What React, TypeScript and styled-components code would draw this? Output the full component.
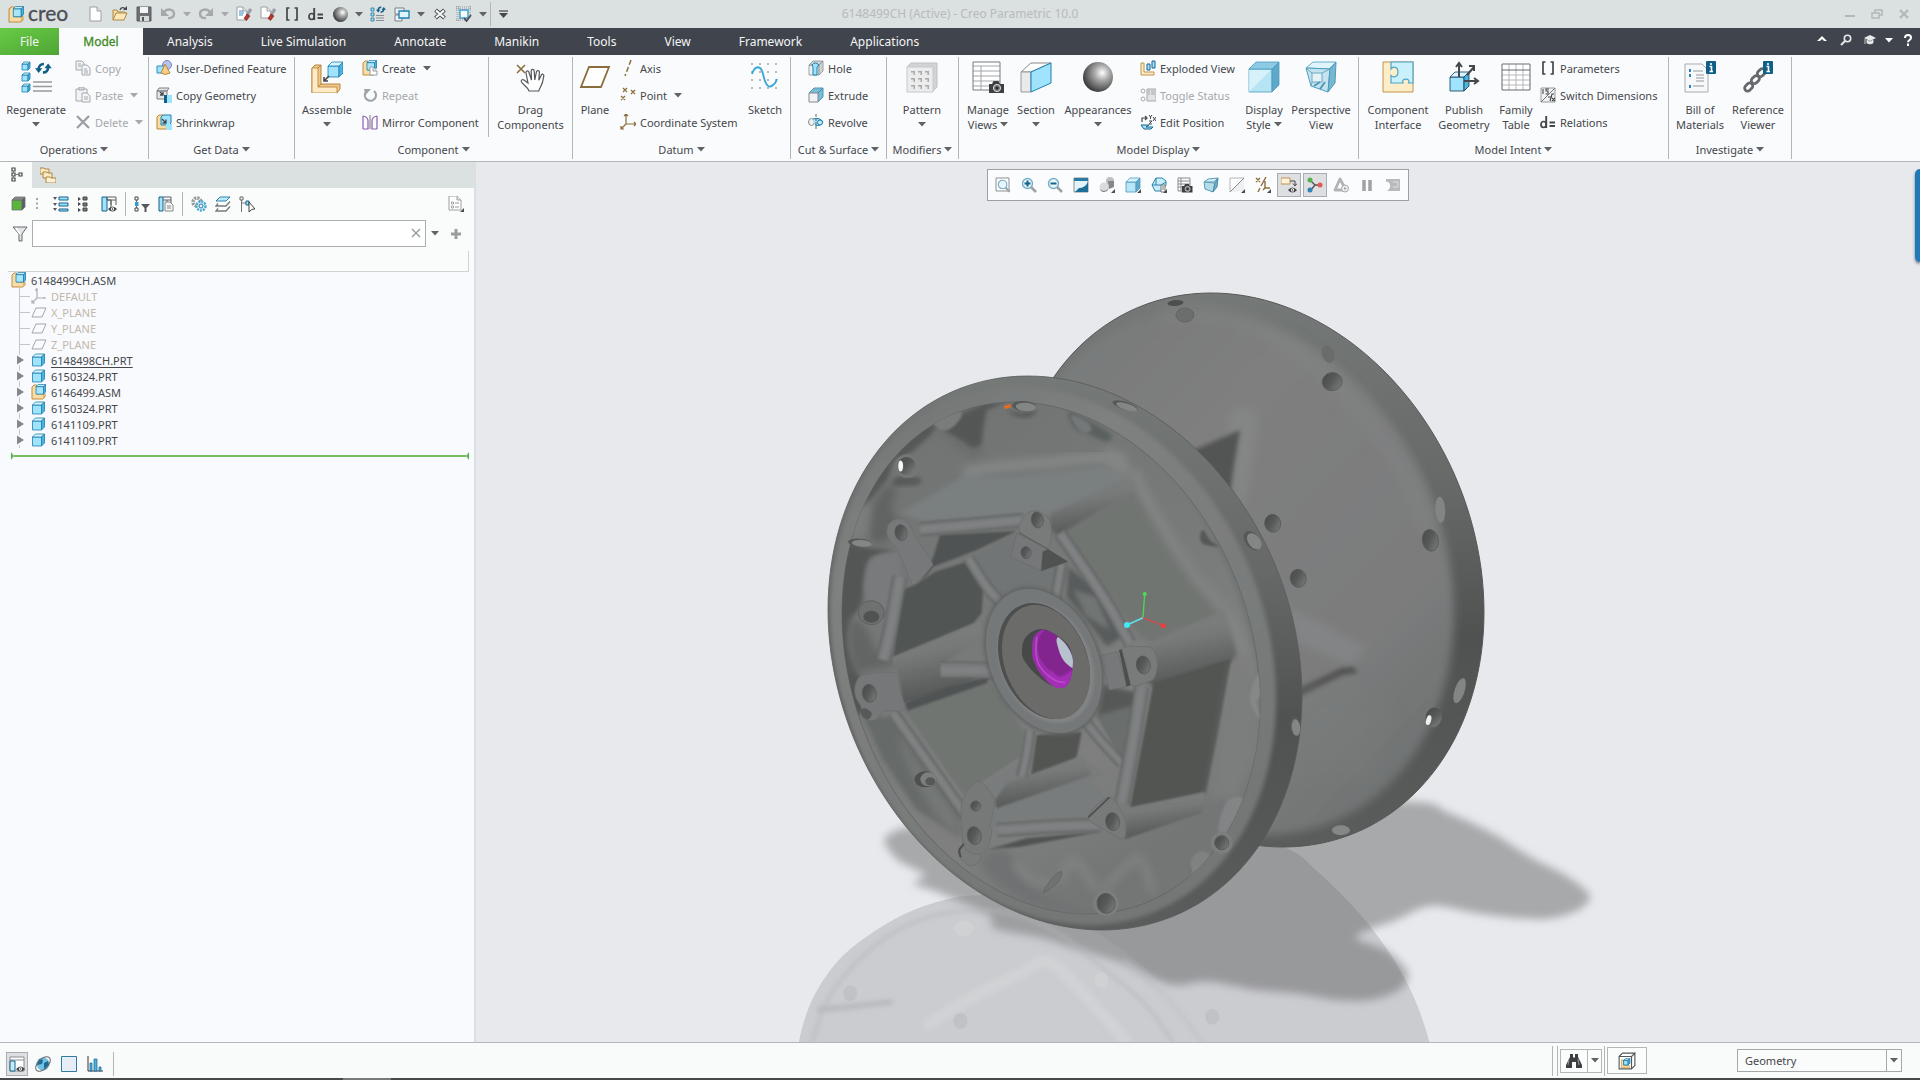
import React from "react";
import styled, { createGlobalStyle, css } from "styled-components";

const GlobalStyle = createGlobalStyle`
  * { box-sizing: border-box; }
  body { margin: 0; background: #fafbfd; }
  button, input, select { font: inherit; color: inherit; }
`;

const INK = "#45474b";
const MUTED = "#a6a8ab";
const BLUE = "#9fe3fc";
const DEEP = "#15638c";
const GOLD = "#8a6d3b";

const buttonReset = css`
  appearance: none;
  border: 0;
  background: none;
  padding: 0;
  margin: 0;
  cursor: default;
`;

/* ---------- frame ---------- */

const Frame = styled.div`
  min-height: 100vh;
  display: flex;
  flex-direction: column;
  font-family: "Noto Sans", "Open Sans", sans-serif;
  font-size: 11px;
  line-height: 15px;
  color: ${INK};
`;

const TitleBar = styled.header`
  display: grid;
  grid-template-columns: 1fr auto 1fr;
  align-items: center;
  height: 28px;
  background: #dbe0e0;
`;

const QuickBar = styled.div`
  display: flex;
  align-items: center;
  padding-left: 8px;
`;

const Brand = styled.div`
  display: flex;
  align-items: center;
  gap: 3px;
  width: 76px;
  padding-bottom: 2px;
  font-family: Lato, sans-serif;
  font-size: 21px;
  line-height: 24px;
  color: #4b4f55;
  -webkit-text-stroke: 0.3px #4b4f55;
  & > svg { margin-top: 2px; }
`;

const Title = styled.h1`
  margin: 0;
  font-size: 12px;
  line-height: 16px;
  font-weight: 400;
  color: #b7bbbc;
`;

const WindowButtons = styled.div`
  display: flex;
  justify-content: flex-end;
  padding-right: 3px;
`;

const IconButton = styled.button<{ $w?: number; $h?: number; $on?: boolean }>`
  ${buttonReset}
  display: flex;
  flex: none;
  align-items: center;
  justify-content: center;
  width: ${(p) => p.$w ?? 24}px;
  height: ${(p) => p.$h ?? 24}px;
  ${(p) => p.$on && css`background: #dddfe2; border: 1px solid #a9acb0;`}
`;

const Rule = styled.span<{ $h: number; $m?: number }>`
  flex: none;
  width: 1px;
  height: ${(p) => p.$h}px;
  margin: 0 ${(p) => p.$m ?? 0}px;
  background: #b3b6b9;
`;

/* ---------- tabs ---------- */

const TabBar = styled.nav`
  display: flex;
  height: 27px;
  background: #40444c;
  font-size: 12px;
  line-height: 16px;
`;

const Tab = styled.button<{ $kind?: "file" | "active" }>`
  ${buttonReset}
  padding: 0 24px;
  color: #f4f5f6;
  ${(p) => p.$kind === "file" && css`
    width: 59px; padding: 0; background: linear-gradient(160deg, #67cb45, #4fa535);
  `}
  ${(p) => p.$kind === "active" && css`
    width: 84px; padding: 0; background: #fafbfd; color: #3f8a24; -webkit-text-stroke: 0.3px #3f8a24;
  `}
`;

const TabTools = styled.div`
  display: flex;
  align-items: center;
  margin-left: auto;
  padding-bottom: 3px;
`;

/* ---------- ribbon ---------- */

const Ribbon = styled.section`
  display: flex;
  height: 107px;
  padding-top: 2px;
  background: #fafbfd;
  border-bottom: 1px solid #b4b8bc;
`;

const GroupBox = styled.div<{ $w: number }>`
  display: flex;
  flex-direction: column;
  flex: none;
  width: ${(p) => p.$w}px;
  height: 102px;
  border-right: 1px solid #b3b6b9;
`;

const GroupBody = styled.div<{ $pad?: number }>`
  display: flex;
  flex: none;
  height: 80px;
  padding-left: ${(p) => p.$pad ?? 0}px;
`;

const GroupLabel = styled.button`
  ${buttonReset}
  display: flex;
  flex: none;
  align-items: center;
  justify-content: center;
  gap: 3px;
  height: 24px;
`;

const BigButton = styled.button<{ $w: number }>`
  ${buttonReset}
  display: flex;
  flex-direction: column;
  flex: none;
  align-items: center;
  justify-content: flex-start;
  width: ${(p) => p.$w}px;
  padding-top: 4px;
  white-space: nowrap;
  & > svg { flex: none; margin-bottom: 9px; }
`;

const BigLine = styled.span`
  display: flex;
  align-items: center;
  justify-content: center;
  gap: 3px;
  height: 15px;
`;

const SmallColumn = styled.div<{ $w: number; $ruled?: boolean }>`
  display: grid;
  grid-template-rows: repeat(3, 22px);
  gap: 5px;
  flex: none;
  width: ${(p) => p.$w}px;
  padding-left: 3px;
  ${(p) => p.$ruled && css`border-right: 1px solid #b3b6b9;`}
`;

const SmallButton = styled.button`
  ${buttonReset}
  display: flex;
  align-items: center;
  gap: 4px;
  white-space: nowrap;
  &:disabled { color: ${MUTED}; }
  & > span { margin-right: 3px; }
`;

/* ---------- body ---------- */

const Body = styled.main`
  flex: 1;
  display: flex;
  min-height: 0;
`;

const Side = styled.aside`
  display: flex;
  flex-direction: column;
  flex: none;
  width: 476px;
  background: #fafcfb;
  border-right: 2px solid #dadfe3;
`;

const SideTabs = styled.div`
  display: flex;
  height: 26px;
  background: #dbe0e0;
`;

const SideTab = styled.button<{ $on?: boolean }>`
  ${buttonReset}
  display: flex;
  align-items: center;
  justify-content: center;
  width: 32px;
  ${(p) => p.$on && css`background: #fafcfb;`}
`;

const SideTools = styled.div`
  display: flex;
  align-items: center;
  height: 32px;
  padding: 0 6px;
`;

const Spacer = styled.span<{ $w?: number }>`
  ${(p) => (p.$w ? css`flex: none; width: ${p.$w}px;` : css`flex: 1;`)}
`;

const FilterRow = styled.div`
  display: flex;
  align-items: center;
  height: 27px;
  padding: 0 6px 0 8px;
`;

const FilterField = styled.div`
  display: flex;
  flex: 1;
  height: 27px;
  background: #fff;
  border: 1px solid #acafb2;
`;

const FilterInput = styled.input`
  flex: 1;
  min-width: 0;
  padding: 0 6px;
  border: 0;
  outline: 0;
  background: transparent;
`;

const ColumnHead = styled.div`
  height: 21px;
  margin: 4px 5px 0 8px;
  border-right: 1px solid #cfd3d6;
  border-bottom: 1px solid #cfd3d6;
`;

const Tree = styled.ul`
  flex: 1;
  margin: 0;
  padding: 0 5px 0 11px;
  list-style: none;
  background: #f9fafd;
`;

const TreeRow = styled.li<{ $dim?: boolean; $current?: boolean }>`
  display: flex;
  align-items: center;
  height: 16px;
  color: ${(p) => (p.$dim ? "#c0b8a8" : INK)};
  & > svg:last-of-type { margin-right: 4px; }
  & > span { text-decoration: ${(p) => (p.$current ? "underline" : "none")}; text-underline-offset: 2px; }
`;

const InsertLine = styled.li`
  display: flex;
  align-items: center;
  height: 16px;
`;

const InsertBar = styled.span`
  flex: 1;
  height: 2px;
  background: #76bd5f;
`;

const View = styled.section`
  position: relative;
  flex: 1;
  display: flex;
  flex-direction: column;
  align-items: center;
  min-width: 0;
  padding-top: 7px;
  overflow: hidden;
  background: #e8e9ed;
`;

const Scene = styled.svg`
  position: absolute;
  inset: 0;
  width: 100%;
  height: 100%;
`;

const ViewTools = styled.div`
  position: relative;
  display: flex;
  align-items: center;
  height: 32px;
  padding: 0 2px;
  background: #fbfcfd;
  border: 1px solid #9da1a6;
`;

const ViewSlot = styled.div`
  display: flex;
  justify-content: center;
  width: 26px;
`;

const Drawer = styled.button`
  ${buttonReset}
  position: absolute;
  top: 7px;
  right: 0;
  width: 5px;
  height: 93px;
  border-radius: 5px 0 0 5px;
  background: #2079b9;
  box-shadow: 0 2px 3px #6c7780;
`;

const StatusBar = styled.footer`
  display: flex;
  align-items: center;
  height: 36px;
  padding: 0 18px 0 4px;
  background: #f9fbfa;
  border-top: 1px solid #b4b6b9;
`;

const StatusTools = styled.div`
  display: flex;
  align-items: center;
  padding-top: 6px;
`;

const StatusBox = styled.div<{ $w: number; $h: number }>`
  display: flex;
  align-items: center;
  width: ${(p) => p.$w}px;
  height: ${(p) => p.$h}px;
  border: 1px solid #b4b6b8;
  background: #fbfcfc;
`;

const Picker = styled.label`
  position: relative;
  display: block;
  width: 165px;
  height: 23px;
  margin-left: 90px;
  & > svg { position: absolute; right: 4px; top: 9px; pointer-events: none; }
  &::after { content: ""; position: absolute; right: 15px; top: 0; width: 1px; height: 23px; background: #a5a8ab; }
`;

const PickerSelect = styled.select`
  appearance: none;
  width: 100%;
  height: 100%;
  padding: 0 7px;
  border: 1px solid #a5a8ab;
  border-radius: 0;
  background: #fafbfb;
`;

const BottomEdge = styled.div`
  display: flex;
  height: 2px;
  padding-left: 343px;
  background: #48494a;
  &::before { content: ""; width: 48px; background: #77797a; }
`;

/* ---------- icon building blocks ---------- */

type Draw = React.ReactNode;

const Ico = ({ s = 16, b = s, children }: { s?: number; b?: number; children?: Draw }) => (
  <svg width={s} height={s} viewBox={`0 0 ${b} ${b}`} fill="none" aria-hidden="true">{children}</svg>
);

const Caret = ({ c = "#606266" }: { c?: string }) => (
  <svg width="8" height="5" viewBox="0 0 8 5" aria-hidden="true"><path d="M0 0h8L4 4.6z" fill={c} /></svg>
);

type CubeProps = { x?: number; y?: number; s?: number; d?: number; f?: string; t?: string; r?: string; k?: string };
const Cube = ({ x = 0, y = 0, s = 10, d = 3, f = BLUE, t = "#d8f5ff", r = "#4fb3df", k = "#1c7fae" }: CubeProps) => (
  <g stroke={k} strokeWidth=".8" strokeLinejoin="round">
    <path d={`M${x} ${y + d}h${s}v${s}h${-s}z`} fill={f} />
    <path d={`M${x} ${y + d}l${d} ${-d}h${s}l${-d} ${d}z`} fill={t} />
    <path d={`M${x + s} ${y + d}l${d} ${-d}v${s}l${-d} ${d}z`} fill={r} />
  </g>
);

const AsmGlyph = () => (
  <g>
    <path d="M1 3l2-2h3v9h8v3l-2 2H1z" fill="#f9dda6" stroke="#c08d40" strokeLinejoin="round" />
    <path d="M12 15l2-2v-3h-2z" fill="#e3b566" />
    <Cube x={5} y={.6} s={7.500} d={2} f="#a9e6fb" />
  </g>
);

const Page = ({ x = 2, y = 1, w = 11, h = 14 }: { x?: number; y?: number; w?: number; h?: number }) => (
  <g>
    <path d={`M${x} ${y}h${w - 4}l4 4v${h - 4}h${-w}z`} fill="#fff" stroke="#9b9ea2" />
    <path d={`M${x + w - 4} ${y}v4h4`} fill="#e6e8ea" stroke="#9b9ea2" />
  </g>
);

const Eraser = () => <g><path d="M15 3l-4 6" stroke="#9da1a5" strokeWidth="3.400" /><path d="M11 8l-3 4.500 2.500 2L14 10z" fill="#b5362b" stroke="#7d241b" strokeWidth=".6" /></g>;
const Swap = ({ x = 0, y = 0, k = 1 }: { x?: number; y?: number; k?: number }) => (
  <g transform={`translate(${x} ${y}) scale(${k})`}>
    <path d="M3.500 7c0-3 1.500-5 5-5" stroke="#0f5f86" strokeWidth="2.400" />
    <path d="M12.500 5c0 3-1.500 5-5 5" stroke="#0f5f86" strokeWidth="2.400" />
    <path d="M0 6h7L3.500 10.500zM16 6H9l3.500-4.500z" fill="#0f5f86" />
  </g>
);
const Arrows = ({ c }: { c: string }) => <g><path d="M4 6c3-4 10-3 10 2 0 3-3 4.500-6 4" stroke={c} strokeWidth="2.400" /><path d="M1 2v8h8z" fill={c} /></g>;
const Ball = ({ s }: { s: number }) => (
  <Ico s={s} b={30}>
    <defs><radialGradient id={`ball${s}`} cx=".64" cy=".36" r=".66"><stop offset="0" stopColor="#fff" /><stop offset=".4" stopColor="#a6a6a6" /><stop offset="1" stopColor="#3e3e3e" /></radialGradient></defs>
    <circle cx="15" cy="15" r="15" fill={`url(#ball${s})`} />
  </Ico>
);
const Brackets = () => <Ico><path d="M5.500 2H3v12h2.500M10.500 2H13v12h-2.500" stroke={INK} strokeWidth="1.700" /></Ico>;
const Dequals = () => <Ico><path d="M6.200 2v12M9.500 8.500H15M9.500 12H15" stroke={INK} strokeWidth="1.900" /><ellipse cx="3.600" cy="10.500" rx="2.600" ry="3" stroke={INK} strokeWidth="1.700" /></Ico>;
const Camera = ({ x, y, k = 1 }: { x: number; y: number; k?: number }) => (
  <g transform={`translate(${x} ${y}) scale(${k})`}><path d="M0 3h3l1.500-3h5L11 3h4v9H0z" fill="#3d3f42" /><circle cx="8" cy="7" r="3.600" fill="#777" stroke="#ddd" /><circle cx="8" cy="7" r="1.500" fill="#222" /></g>
);
const Sheet = () => <g><path d="M1 1h27v28H1z" fill="#fff" /><path d="M1 5h27M1 10h27M1 15h27M1 20h27M1 25h27M9 5v24" stroke="#a3a6aa" /><path d="M1 1h27v28H1z" stroke="#777a7e" /></g>;
const EyeMark = ({ x, y }: { x: number; y: number }) => <g transform={`translate(${x} ${y})`}><path d="M0 3q4.500-5 9 0-4.500 5-9 0z" fill="#3f4246" /><circle cx="4.500" cy="3" r="1.700" fill="#fff" /><circle cx="4.500" cy="3" r=".8" fill="#333" /></g>;
const Info = ({ x }: { x: number }) => <g><rect x={x} y="0" width="10" height="13" rx="1" fill="#0f5f86" /><path d={`M${x + 5} 2v2M${x + 3.500} 5.500h2v5m-2 0h3.500`} stroke="#fff" strokeWidth="1.600" /></g>;
const Glass = ({ sign }: { sign?: string }) => (
  <g><path d="M10 10l5 5" stroke="#a0a3a6" strokeWidth="2.600" /><circle cx="6.500" cy="6.500" r="5" fill="#e9f7fd" stroke="#79aec6" strokeWidth="1.400" />{sign && <path d={sign} stroke={DEEP} strokeWidth="2" />}</g>
);
const Corner = () => <path d="M16 12v4h-4z" fill="#4a4c4f" />;

const I = {
  doc: <Ico><Page /></Ico>,
  open: <Ico><path d="M1 14V4h4l1 2h7v3" fill="#f7dca0" stroke="#b08a44" /><path d="M1 14l3-7h11l-3 7z" fill="#fbe7b8" stroke="#b08a44" /><path d="M8 4c1-3 4-3 5-1" stroke={INK} strokeWidth="1.400" /><path d="M15 0v4h-4z" fill={INK} /></Ico>,
  save: <Ico><path d="M1 1h14v14H1z" fill="#6d7074" stroke="#595c60" /><path d="M4 1h8v6H4z" fill="#f3f4f5" /><path d="M4 10h9v5H4z" fill="#d7d9db" /><path d="M6 11h2v4H6z" fill="#55585c" /></Ico>,
  undo: <Ico><Arrows c={MUTED} /></Ico>,
  redo: <Ico><g transform="matrix(-1 0 0 1 16 0)"><Arrows c={MUTED} /></g></Ico>,
  cleanA: <Ico><Page x={1} w={10} h={13} /><path d="M3 5h4M3 7h5M3 9h4" stroke="#3a8db8" /><Eraser /></Ico>,
  cleanB: <Ico><Page x={1} w={10} h={11} /><Eraser /></Ico>,
  regenList: <Ico><path d="M1 2h3v3H1zM1 7h3v3H1zM1 12h3v3H1z" fill={BLUE} stroke={DEEP} strokeWidth=".7" /><path d="M6 9.500h8M6 12h8M6 14.500h8" stroke="#8b8e92" /><Swap x={6} y={0} k={0.620} /></Ico>,
  windows: <Ico><path d="M1 2h9v6H1zM1 9h7v6H1z" fill="#eef1f3" stroke="#7d8186" /><path d="M5 5h10v7H5z" fill="#dff5fd" stroke="#1f7fb0" strokeWidth="1.300" /></Ico>,
  close: <Ico><path d="M3.500 4l9 8M12.500 4l-9 8" stroke="#55585b" strokeWidth="4.200" /><path d="M4 4.500l8 7M12 4.500l-8 7" stroke="#fff" strokeWidth="2" /></Ico>,
  select: <Ico><path d="M0 1h16M0 3h16M0 14h9M1 0v16M3 0v16M14 0v9" stroke="#888" strokeWidth=".8" strokeDasharray="1 1" /><path d="M4 4h8v8H4z" fill="#f5fbfe" stroke="#3d9fce" strokeWidth="1.400" /><path d="M8 12l2.500 3L15 9" stroke="#4c4f53" strokeWidth="1.800" /></Ico>,
  regen: <Ico s={32}><Cube x={2} y={1} s={6} d={2} /><Cube x={2} y={12} s={6} d={2} /><Cube x={2} y={23} s={6} d={2} /><Swap x={15} y={1} k={1.050} /><path d="M13 21h19M13 25.500h19M13 30h19" stroke="#96999d" strokeWidth="1.500" /></Ico>,
  copy: <Ico><path d="M1 1h6l2 2v7H1z" fill="#f0f1f2" stroke={MUTED} /><path d="M7 5h5l3 3v7H7z" fill="#f4f5f6" stroke={MUTED} /><path d="M3 4h3M3 6h3M9 9h3M9 11h4M9 13h4" stroke={MUTED} /></Ico>,
  paste: <Ico><path d="M1 2h11v12H1z" fill="#f2f3f4" stroke={MUTED} /><path d="M4 0h5v3H4z" fill="#d8dadc" stroke={MUTED} /><path d="M7 6h5l3 3v6H7z" fill="#f4f5f6" stroke={MUTED} /><path d="M9 10h4M9 12h4" stroke={MUTED} /></Ico>,
  del: <Ico><path d="M2 2l12 12M14 2L2 14" stroke="#9b9da0" strokeWidth="2.200" /></Ico>,
  udf: <Ico><circle cx="11" cy="5" r="4.500" fill="#b9c3ea" stroke="#7482bd" /><path d="M1 6h7v7H1z" fill={BLUE} stroke="#2a8fbe" /><path d="M9 4l5 9q-5 3-9 0z" fill="#f5cf8a" stroke="#b5873a" /></Ico>,
  copyGeo: <Ico><path d="M1 4l2-3h10l-2 3zM1 4h10v8H1z" fill="#e4e6e8" stroke="#7d8084" /><path d="M4 5l3 3m0-3v3H4" stroke={INK} strokeWidth="1.300" /><path d="M8 8h8v8H8z" fill={BLUE} /><path d="M8 8h3v8H8z" fill="#0f5f86" /></Ico>,
  shrink: <Ico><path d="M1 3l2-2h4v9h7v3l-2 2H1z" fill="#f9dda6" stroke="#bb8635" /><path d="M5 3l2-2h8v8l-2 2H5z" fill={BLUE} stroke="#1c7fae" /><path d="M6 5l4 4m0-3.500V9H6.500" stroke={INK} strokeWidth="1.300" /><path d="M10 10h6v6h-6z" fill={BLUE} /></Ico>,
  assemble: <Ico s={32}><g transform="translate(0 1)"><path d="M1 6l3-3h6v19h19v5l-3 4H1z" fill="#f0c98a" stroke="#b5853d" /><path d="M1 6h6v19h19v6H1z" fill="#fdebc8" stroke="#c1914a" /><path d="M7 25l3-3M7 6l3-3" stroke="#b5853d" /></g><Cube x={17} y={1} s={11} d={4} /><path d="M18 15l-5 5m0-4v4h4" stroke={INK} strokeWidth="1.600" /></Ico>,
  create: <Ico><AsmGlyph /><Page x={8} y={7} w={7} h={8} /></Ico>,
  repeat: <Ico><path d="M12 4A5.500 5.500 0 1 1 4 5" stroke="#a0a3a6" strokeWidth="2.200" /><path d="M2 2h7L3.500 8z" fill="#a0a3a6" /></Ico>,
  mirror: <Ico><path d="M1 2v13M1 2q5 1 5 5v8H1M15 2v13M15 2q-5 1-5 5v8h5" stroke="#8c5fb0" strokeWidth="1.200" /><path d="M8 1v14" stroke="#777" /></Ico>,
  drag: <Ico s={32}><path d="M2 4l8 8M10 4l-8 8" stroke={GOLD} strokeWidth="1.600" /><path d="M14 30c-1-4-5-5-7.500-9-1-2 1-3 2.500-2l4 3-2-10c-.4-2 2-3 2.800-1l2.700 8-.3-9c0-2.200 2.900-2.200 3 0l.6 9 1.600-8c.4-2 3-1.800 3 .2l-.6 8 2.400-5c.8-1.800 3-1 2.600 1-.8 6-1.600 8-3.400 11-1 1.600-1.400 2.600-1.600 3.800z" fill="#fff" stroke="#55575b" strokeWidth="1.200" /></Ico>,
  plane: <Ico s={32}><path d="M10 6h20l-8 20H2z" fill="#fff" stroke={GOLD} strokeWidth="1.800" /></Ico>,
  axis: <Ico><path d="M11 0L5 16" stroke={GOLD} strokeWidth="1.500" strokeDasharray="5 2.500" /></Ico>,
  point: <Ico><path d="M3 1l4 4M7 1L3 5M11 3l4 4M15 3l-4 4M1 9l4 4M5 9l-4 4" stroke={GOLD} strokeWidth="1.300" /></Ico>,
  csys: <Ico><path d="M6 0v10h10M6 10l-5 5M4 2l2-2 2 2M14 8l2 2-2 2M1 12v3h3" stroke={GOLD} strokeWidth="1.200" /></Ico>,
  csysDim: <Ico><path d="M6 1v9h9M6 10l-5 5M5 3V1h2M13 9v2M1 12v3h3" stroke="#aeb0b2" strokeWidth="1.200" /></Ico>,
  planeDim: <Ico><path d="M5 4h10l-4 9H1z" stroke="#a3a5a7" /></Ico>,
  sketch: <Ico s={32}><g fill="#666">{[3, 11, 19, 27].map((x) => [3, 11, 19, 27].map((y) => <circle key={`${x}-${y}`} cx={x} cy={y} r=".8" />))}</g><path d="M3 13C6 4 12 4 14 13s5 16 10 11q3-2 4-6" stroke="#35a7d8" strokeWidth="1.800" /></Ico>,
  hole: <Ico><Cube x={1} y={1} s={10} d={4} f="#eef0f1" t="#cfd2d5" r="#cfd2d5" k="#8a8d91" /><path d="M4 5q3-4 7 0l-2 2v8H5V7z" fill={BLUE} stroke="#1c7fae" /></Ico>,
  extrude: <Ico><path d="M1 6l5-5h9v9l-5 5z" fill="#77bdd9" stroke="#5893ab" /><path d="M1 6h9v9H1z" fill="#f1f2f3" stroke="#85888c" /><path d="M10 6l5-5" stroke="#3b87a8" /></Ico>,
  revolve: <Ico><ellipse cx="3.500" cy="8" rx="3" ry="3.500" fill="#eee" stroke="#8a8d91" /><path d="M5 5q7-2 10 3-3 5-8 3" fill={BLUE} stroke="#1c7fae" /><circle cx="12" cy="8.500" r="2.500" fill="#bfeafb" stroke="#1c7fae" /><path d="M8 0v16" stroke="#666" strokeDasharray="3 1" /></Ico>,
  pattern: <Ico s={32}><path d="M1 6l4-4h26v24l-4 4" fill="#d2d3d5" stroke="#bfc1c3" /><path d="M1 6h26v25H1z" fill="#ececed" stroke="#c6c8ca" /><g>{[5, 12, 19].map((x) => [10, 17, 24].map((y) => <g key={`${x}-${y}`}><path d={`M${x} ${y}h4v4h-4z`} fill="#a9abad" /><path d={`M${x} ${y + 1.500}h2.500v2.500h-2.500z`} fill="#e8e9ea" /></g>))}</g></Ico>,
  manage: <Ico s={32}><Sheet /><Camera x={17} y={20} /></Ico>,
  section: <Ico s={32}><path d="M1 11l10-9h20l-20 9z" fill="#fff" stroke="#888" /><path d="M1 11h10v20H1z" fill="#e9eaeb" stroke="#999" /><path d="M11 11l20-9v20L11 31z" fill={BLUE} stroke="#1c7fae" /></Ico>,
  exploded: <Ico><path d="M1 3h3v9h10v3H1z" fill="#fdebc8" stroke="#c1914a" /><path d="M7 4h3v6H7zM12 1h3v7h-3z" fill={BLUE} stroke={DEEP} /></Ico>,
  toggle: <Ico><circle cx="3" cy="4" r="2" stroke={MUTED} /><circle cx="3" cy="12" r="2" stroke={MUTED} /><path d="M7 2h9v12H7z" fill="#e2e3e5" stroke={MUTED} /><path d="M9 3v5M12 3v5M14 3v5" stroke={MUTED} /></Ico>,
  editPos: <Ico><path d="M2 8V4h5M5 2l2 2-2 2" stroke={INK} strokeWidth="1.200" /><path d="M9 1l1.500 2L12 1M10.500 3v2M13 3l3 4M16 3l-3 4M9 7h3L9 10h3" stroke={INK} /><path d="M1 11h8l-3 2h7l-2 2H4z" fill={BLUE} stroke={DEEP} /></Ico>,
  display: <Ico s={32}><Cube x={1} y={1} s={23} d={7} f="#b5e4f5" t="#8ccbe3" r="#5ea9c9" k="#4c9bbd" /><path d="M1 31V9h22z" fill="#e4f6fc" opacity=".7" /></Ico>,
  perspective: <Ico s={32}><path d="M1 7l7-6h23l-7 7z" fill="#dff4fb" stroke="#6bb0ca" /><path d="M1 7l5 18 17 6 2-23z" fill="#c5e3ee" stroke="#4c9bbd" /><path d="M25 8l6-7-1 21-7 9z" fill="#78b7d0" stroke="#4c9bbd" /><path d="M7 12h10v9H7zM1 7l6 5M6 25l1-4M17 12l8-4" stroke="#6ba8bf" fill="#e6f2f6" /><path d="M9 25l6-4M15 28l5-7" stroke="#4b9abb" strokeWidth="2" /></Ico>,
  iface: <Ico s={32}><path d="M1 1h30v30H1z" fill="#feedc9" stroke="#c1914a" /><path d="M9 1h22v21h-4.500c3-5-8-5.500-5.500 0H9V14.500c1.500 2 7 2 7-3.500S11 5 9 8z" fill="#c9f0fb" stroke="#4fa5c5" strokeWidth="1.200" /></Ico>,
  publish: <Ico s={32}><Cube x={2} y={11} s={14} d={5} k="#0f3d55" /><path d="M11 16V3M8 6l3-4 3 4M19 14l7-8m-5-1h5v5M16 20h13M26 17l4 3-4 3" stroke={INK} strokeWidth="2" /></Ico>,
  family: <Ico s={32}><path d="M2 3h28v26H2z" fill="#fff" /><path d="M2 14h28M2 19h28M2 24h28M9 3v26M16 3v26M23 3v26" stroke="#b5b7ba" /><path d="M2 3h28v26H2zM2 9h28" stroke="#696c70" /></Ico>,
  switchDim: <Ico><path d="M1 1h14v14H1z" fill="#f1f2f3" stroke="#999" /><path d="M15 1L1 15" stroke="#777" /><path d="M3 2v5M9 2H6v2h2v3H5.500M10 14l2-7h2M8 10h4M12 11l3 3M15 11l-3 3" stroke={INK} strokeWidth="1.100" /></Ico>,
  bom: <Ico s={32}><path d="M1 3h17l6 6v22H1z" fill="#f7f8f9" stroke="#a9acb0" /><path d="M9 10h10M12 14h8M12 17h8M12 20h8M9 25h11" stroke="#96999d" /><path d="M5 8h2v3H5zM5 13h2v3H5zM5 24h2v3H5z" fill="#2b86b5" /><Info x={22} /></Ico>,
  refview: <Ico s={32}><g stroke="#66696d" strokeWidth="2.800"><rect x="-4" y="-2.500" width="9" height="6" rx="3" transform="translate(6 26) rotate(-45)" /><rect x="-4" y="-3" width="9" height="6" rx="3" transform="translate(13 19) rotate(-45)" /><rect x="-4" y="-3" width="9" height="6" rx="3" transform="translate(19 12) rotate(-45)" /></g><Info x={21} /></Ico>,
  tree: <Ico><path d="M4 1h3v3H4zM4 6h3v3H4zM4 11h3v3H4zM11 6h3v3h-3z" stroke="#44474b" strokeWidth="1.200" /><path d="M5.500 4v2M5.500 9v2M7 7.500h4" stroke="#77797d" /></Ico>,
  folders: <Ico><path d="M0 1h4l1 1h4v5H0z" fill="#fbe9c3" stroke="#ad8642" /><path d="M3 5h4l1 1h4v5H3z" fill="#fbe9c3" stroke="#ad8642" /><path d="M6 10h4l1 1h5v5H6z" fill="#fdf0d3" stroke="#ad8642" /></Ico>,
  greenCube: <Ico><Cube x={2} y={1} s={10} d={3} f="#5ab53a" t="#85878a" r="#5c5f62" k="#6d7073" /></Ico>,
  grip: <Ico><path d="M7 2v13" stroke="#a5a7aa" strokeWidth="2" strokeDasharray="2 2.500" /></Ico>,
  expand: <Ico><path d="M6 1h9v3H6zM6 7h9v3H6zM6 13h9v2H6z" fill={BLUE} stroke={DEEP} /><path d="M0 1h4L2 4zM0 7h4l-2 3zM0 12h4l-2 3z" fill="#55585c" /></Ico>,
  collapse: <Ico><path d="M6 1h4v3H6zM6 7h4v3H6zM6 12h4v3H6z" fill="#77797c" stroke="#444" /><path d="M1 1l3 2-3 2zM1 6l3 2-3 2zM1 12l3 2-3 2z" fill="#44474b" /></Ico>,
  columns: <Ico><path d="M1 1h5v14H1z" fill={BLUE} stroke={DEEP} /><path d="M6 1h9v3H6zM6 4h4v11M10 4v5M15 4v5" stroke="#5b5e62" /><EyeMark x={7} y={10} /></Ico>,
  treeFilter: <Ico><path d="M2.500 4v8" stroke="#777" /><path d="M1 1h3v3H1zM1 12h3v3H1z" stroke="#444" /><path d="M1 6h3.500v4H1z" fill="#2f9dce" /><path d="M7 8h9l-3.500 4v4h-2v-4z" fill="#55585b" /></Ico>,
  treeCols: <Ico><path d="M1 1h4v14H1z" fill={BLUE} stroke={DEEP} /><path d="M5 1h8v3H5M9 4v3M13 4v3" stroke="#5b5e62" /><path d="M7 6h5l3 3v6H7z" fill="#f4f5f6" stroke="#888" /><path d="M9 10h4M9 12h4" stroke="#888" /></Ico>,
  gears: <Ico><circle cx="6" cy="6" r="4" stroke="#9a9da0" strokeWidth="3.500" strokeDasharray="2.200 .9" /><circle cx="10" cy="10" r="4.500" fill="#dff4fc" stroke="#4ba7cf" strokeWidth="2.400" strokeDasharray="2 1" /><circle cx="10" cy="10" r="2" stroke="#27789f" /></Ico>,
  layers: <Ico><path d="M5 1h10l-4 4H1z" fill="#bfeafb" stroke="#2a83ad" /><path d="M15 5.500l-4 4.500H1l2-2.500M15 10.500L11 15H1l2-2.500" stroke="#77797c" strokeWidth="1.300" /></Ico>,
  treePick: <Ico><path d="M1 1h3v3H1z" stroke="#666" /><path d="M2.500 4v12M2.500 7H7" stroke="#777" /><path d="M7 5h3v4H7z" fill={BLUE} stroke={DEEP} /><path d="M10 6l6 7-3 .3L10 16z" fill="#fff" stroke="#444" /></Ico>,
  settings: <Ico><Page x={1} y={0} w={12} h={14} /><circle cx="4.500" cy="7" r="1.200" stroke="#999" /><circle cx="4.500" cy="11" r="1.200" stroke="#999" /><path d="M7 7h4M7 11h4" stroke="#999" /><Corner /></Ico>,
  funnel: <Ico><path d="M1 1h14l-5 7v7H7V8z" fill="#e3e4e6" stroke="#66696d" /><path d="M8 8l-4-6" stroke="#fff" strokeWidth="1.500" /></Ico>,
  clear: <Ico s={10}><path d="M1 1l8 8M9 1L1 9" stroke="#9b9ea1" strokeWidth="1.500" /></Ico>,
  plus: <Ico s={12}><path d="M6 1v10M1 6h10" stroke="#9b9da0" strokeWidth="3" /></Ico>,
  part: <Ico><Cube x={1.500} y={2} s={9} d={3} /></Ico>,
  asm: <Ico><AsmGlyph /></Ico>,
  logo: <Ico s={17} b={16}><AsmGlyph /></Ico>,
  refit: <Ico><path d="M1 1h13v13H1z" fill="#fff" stroke="#8c8f93" /><g transform="translate(2 2) scale(.85)"><Glass /></g></Ico>,
  zoomIn: <Ico><Glass sign="M3.500 6.500h6M6.500 3.500v6" /></Ico>,
  zoomOut: <Ico><Glass sign="M3.500 6.500h6" /></Ico>,
  repaint: <Ico><path d="M1 1h14v14H1z" fill="#e4f4fb" stroke="#8c8f93" /><path d="M1 1h14v3H1z" fill="#2a7ba3" /><path d="M15 5v10H2l4-4q6 0 9-6z" fill="#1d6f98" /></Ico>,
  shading: <Ico><circle cx="11" cy="4" r="4" fill="#bcbec0" /><path d="M9 4h6v6l-5 2z" fill="#85888b" /><circle cx="5" cy="10" r="4.500" fill="#dadbdc" /><path d="M1 12q4 4 8 0v-3q2 5-4 6-3 0-4-3z" fill="#77797c" /><Corner /></Ico>,
  style: <Ico><Cube x={1} y={1} s={10} d={4} f="#b7e6f6" t="#d9f3fb" r="#5ea9c9" k="#4c9bbd" /><Corner /></Ico>,
  saved: <Ico><path d="M1 8l4-7h6l4 3v4l-4 6H4z" fill="#c9eefb" stroke="#2a83ad" /><path d="M1 8h9l5-3M5 1v7" stroke="#2a83ad" /><path d="M10 8h4v7h-4z" fill="#fff" stroke="#777" /><path d="M11 10h2M11 12h2" stroke="#777" /><Corner /></Ico>,
  viewMgr: <Ico><path d="M1 1h12v13H1zM1 4h12M1 7h12M1 10h8M4 1v13" stroke="#8a8d91" /><Camera x={5} y={7} k={0.7} /></Ico>,
  persp: <Ico><path d="M1 5l4-3 10-1-4 4z" fill="#d5eef8" stroke="#5b9cb7" /><path d="M1 5l1 7 8 3 2-9z" fill="#b4dbea" stroke="#5b9cb7" /><path d="M12 6l3-5-1 9-4 5z" fill="#6eb0cb" stroke="#4b8eab" /></Ico>,
  hidden: <Ico><path d="M1 1h14L1 15z" fill="#fff" stroke="#b4b6b9" /><path d="M1 15L15 1v13z" fill="#eeeff0" /><path d="M1 15L15 1" stroke="#888" /><Corner /></Ico>,
  datum: <Ico><path d="M1 1l4 4M5 1L1 5M11 0L6 9M5 11l-2 4M10 4v7h5M10 11l-2 2" stroke={GOLD} strokeWidth="1.400" /><Corner /></Ico>,
  annot: <Ico><path d="M0 1h9v6H0z" fill="#fff2da" stroke="#bc9352" /><path d="M9 4h5v4M12 6.500L14 9l2-2.500" stroke={INK} /><EyeMark x={7} y={10} /></Ico>,
  spin: <Ico><path d="M3 3l5 5h6M8 8l-5 6" stroke="#555" strokeWidth="1.400" /><circle cx="3" cy="3" r="2.500" fill="#51b34a" /><circle cx="13" cy="8" r="2.500" fill="#e05a55" /><circle cx="3" cy="13" r="2.500" fill="#3182b5" /></Ico>,
  simulate: <Ico><path d="M7 2L2 13h11z" stroke="#b1b3b5" strokeWidth="2.800" strokeLinejoin="round" /><circle cx="12" cy="11.500" r="3.500" fill="#eee" stroke={MUTED} /><path d="M11 10l3 1.500-3 1.500z" fill={MUTED} /></Ico>,
  pause: <Ico><path d="M5 3v11M11 3v11" stroke="#a0a3a6" strokeWidth="3.500" /></Ico>,
  play: <Ico><path d="M1 2h14v12H2q4-3 3-6Q4 4 1 5z" fill="#b8babd" /><path d="M8 5h5v5H8" stroke="#dfe0e1" /></Ico>,
  panel: <Ico><path d="M1 1h14v14H1z" fill="#fff" stroke="#8a8d91" /><path d="M1 4h14" stroke="#8a8d91" /><path d="M1 5h5v10H1z" fill="#c7ecf9" stroke={DEEP} /><EyeMark x={7} y={10} /></Ico>,
  globe: <Ico><circle cx="8" cy="8" r="6.500" fill="#74c0e4" /><path d="M4 3l4 1-1 4-5 1zM9 7l4-2 1 4-5 4z" fill="#1c6a97" /><ellipse cx="8" cy="8" rx="9" ry="5" transform="rotate(-45 8 8)" stroke="#66696d" /></Ico>,
  blank: <Ico><path d="M.5.5h15v15H.5z" fill="#e6edf4" stroke="#2d7ca5" /></Ico>,
  bars: <Ico><path d="M1 0v15h15" stroke="#333" /><path d="M3 7h2v8H3zM7 3h3v12H7zM12 11h2v4h-2z" fill="#4db2df" stroke={DEEP} strokeWidth=".7" /></Ico>,
  find: <Ico><path d="M4 1h3v3l1 1 1-1V1h3v3l4 8v3h-6V9H6v6H0v-3l4-8z" fill="#3c3e41" /><path d="M3 6l-1 6M12 6l1 6" stroke="#999" /></Ico>,
  box3d: <Ico s={18} b={16}><path d="M1 4h11v11H1zM1 4l3-3h11l-3 3M15 1v11l-3 3" fill="#fff" stroke="#55585b" /><path d="M3 7h2v5h5v2H3z" fill="#f8dba0" stroke="#c1914a" strokeWidth=".6" /><Cube x={5} y={6} s={4} d={1.500} /></Ico>,
};

/* ---------- geometry of the scene ---------- */

type Pt = [number, number];
const pairs = (n: number[]): Pt[] => {
  const out: Pt[] = [];
  for (let i = 0; i < n.length; i += 2) out.push([n[i], n[i + 1]]);
  return out;
};
/* survey frames of the part, mapped into scene units: whole part (up, lo), front flange (ft, fb) */
const up = (...n: number[]) => pairs(n).map(([x, y]): Pt => [780 + x * 0.47194, 280 + y / 3]);
const lo = (...n: number[]) => pairs(n).map(([x, y]): Pt => [780 + x * 0.53571, 640 + y / 3]);
const ft = (...n: number[]) => pairs(n).map(([x, y]): Pt => [820 + x / 3, 370 + y / 3]);
const fb = (...n: number[]) => pairs(n).map(([x, y]): Pt => [820 + x / 3, 650 + y / 3]);

const curve = (p: Pt[], closed = true) => {
  const n = p.length;
  const at = (i: number) => (closed ? p[(i + n) % n] : p[Math.max(0, Math.min(n - 1, i))]);
  let d = `M${p[0][0].toFixed(1)} ${p[0][1].toFixed(1)}`;
  for (let i = 0; i < (closed ? n : n - 1); i++) {
    const [a, b, c, e] = [at(i - 1), at(i), at(i + 1), at(i + 2)];
    d += `C${[b[0] + (c[0] - a[0]) / 6, b[1] + (c[1] - a[1]) / 6, c[0] - (e[0] - b[0]) / 6, c[1] - (e[1] - b[1]) / 6, c[0], c[1]].map((v) => v.toFixed(1)).join(" ")}`;
  }
  return closed ? d + "Z" : d;
};
const poly = (p: Pt[]) => "M" + p.map((q) => q.map((v) => v.toFixed(1)).join(" ")).join("L") + "Z";

/* a tilted ellipse: half width a, half height b, skew s between the axes */
const oval = (cx: number, cy: number, a: number, b: number, s: number) => {
  const k = s / a;
  const h = Math.sqrt(b * b - k * k);
  return curve(Array.from({ length: 40 }, (_, i): Pt => {
    const t = (i / 40) * Math.PI * 2;
    return [cx + a * Math.cos(t), cy + k * Math.cos(t) + h * Math.sin(t)];
  }));
};

const rearOutline = oval(1247, 570, 237, 277, 10000);
const rearFace = oval(1230, 573, 224, 262, 9200);
const frontOutline = oval(1065, 653, 237, 277, 10300);
const crest = oval(1053, 656, 223, 269, 9600);
const recess = oval(1051, 658, 209, 256, 9300);
const shadow = curve(lo(1180, 485, 1250, 520, 1330, 580, 1400, 650, 1460, 700, 1500, 745, 1512, 775, 1490, 810, 1440, 835, 1380, 835, 1300, 820, 1215, 798, 1150, 840, 1075, 890, 1130, 930, 1165, 980, 1172, 1015, 1150, 1055, 1100, 1080, 1040, 1080, 960, 1060, 890, 1050, 800, 1025, 740, 1035, 690, 1010, 640, 970, 540, 920, 490, 895, 400, 865, 390, 825, 300, 760, 250, 730, 270, 705, 220, 660, 195, 600, 220, 570, 250, 560, 500, 500, 900, 500));
const mirrorRear = curve(lo(800, 560, 945, 625, 1000, 690, 1070, 800, 1130, 920, 1180, 1060, 1213, 1210, 1220, 1300, 35, 1300, 35, 1210, 60, 1080, 110, 960, 180, 870, 250, 810, 330, 772, 400, 762, 500, 740));
const mirrorFront = curve(lo(35, 1210, 60, 1080, 110, 960, 180, 870, 250, 810, 330, 772, 400, 762, 480, 790, 560, 850, 640, 930, 720, 1040, 770, 1130, 805, 1220, 800, 1300, 35, 1300));

const Hole = ({ p, rx = 7, ry = 9 }: { p: Pt; rx?: number; ry?: number }) => (
  <g transform={`rotate(-10 ${p[0]} ${p[1]})`}>
    <ellipse cx={p[0]} cy={p[1]} rx={rx} ry={ry} fill="url(#bore)" stroke="#565958" strokeWidth=".8" />
  </g>
);

const Lens = ({ p, rx, ry, turn = 0 }: { p: Pt; rx: number; ry: number; turn?: number }) => (
  <g transform={`rotate(${turn} ${p[0]} ${p[1]})`}>
    <ellipse cx={p[0]} cy={p[1]} rx={rx} ry={ry} fill="#555857" />
    <ellipse cx={p[0] + rx * 0.16} cy={p[1] + ry * 0.16} rx={rx * 0.84} ry={ry * 0.84} fill="#848685" />
  </g>
);

const Band = ({ p, w = 11, c = "#777a7a" }: { p: Pt[]; w?: number; c?: string }) => (
  <g fill="none" strokeLinejoin="round" strokeLinecap="butt" filter="url(#soft)">
    <path d={curve(p, false)} stroke="#5f6261" strokeWidth={w + 3} />
    <path d={curve(p, false)} stroke={c} strokeWidth={w} />
    <path d={curve(p, false)} stroke="#7f8182" strokeWidth={w / 2} />
  </g>
);

const Model = () => (
  <Scene viewBox="476 162 1444 880" preserveAspectRatio="xMidYMid slice" role="img" aria-label="6148499CH assembly">
    <defs>
      <filter id="soft" filterUnits="userSpaceOnUse" x="820" y="370" width="500" height="570"><feGaussianBlur stdDeviation=".9" /></filter>
      <filter id="b1" x="-20%" y="-20%" width="140%" height="140%"><feGaussianBlur stdDeviation=".9" /></filter>
      <filter id="b2" x="-20%" y="-20%" width="140%" height="140%"><feGaussianBlur stdDeviation="2" /></filter>
      <filter id="b4" x="-30%" y="-30%" width="160%" height="160%"><feGaussianBlur stdDeviation="4" /></filter>
      <filter id="b8" x="-30%" y="-30%" width="160%" height="160%"><feGaussianBlur stdDeviation="8" /></filter>
      <linearGradient id="rear" x1="0" y1="0" x2=".9" y2="1"><stop offset="0" stopColor="#757878" /><stop offset=".35" stopColor="#7f7f7f" /><stop offset=".75" stopColor="#7b7c7d" /><stop offset="1" stopColor="#6c6f6e" /></linearGradient>
      <linearGradient id="edge" x1="0" y1="0" x2="0" y2="1"><stop offset="0" stopColor="#757978" /><stop offset=".35" stopColor="#666968" /><stop offset=".62" stopColor="#505251" /><stop offset="1" stopColor="#5a5d5c" /></linearGradient>
      <linearGradient id="lip" x1="0" y1="0" x2=".5" y2="1"><stop offset="0" stopColor="#707373" /><stop offset=".3" stopColor="#7f8180" /><stop offset="1" stopColor="#747776" /></linearGradient>
      <linearGradient id="face" x1="0" y1="0" x2=".5" y2="1"><stop offset="0" stopColor="#6f7271" /><stop offset=".45" stopColor="#767978" /><stop offset=".8" stopColor="#7f7f7f" /><stop offset="1" stopColor="#747676" /></linearGradient>
      <linearGradient id="bore" x1="0" y1="0" x2="1" y2=".9"><stop offset="0" stopColor="#474949" /><stop offset=".5" stopColor="#575959" /><stop offset="1" stopColor="#7c7e7e" /></linearGradient>
      <linearGradient id="shaft" x1=".1" y1="0" x2=".35" y2="1"><stop offset="0" stopColor="#7c7e7e" /><stop offset=".4" stopColor="#787a7a" /><stop offset="1" stopColor="#525453" /></linearGradient>
      <clipPath id="rearClip"><path d={rearOutline} /></clipPath>
      <clipPath id="frontClip"><path d={frontOutline} /></clipPath>
      <clipPath id="recessClip"><path d={recess} /></clipPath>
      <clipPath id="boreClip"><path d={curve([...ft(637, 850, 640, 805, 665, 780, 695, 788), ...fb(735, -20, 757, 20, 757, 60, 748, 95, 730, 113, 700, 108, 660, 70, 640, 30)])} /></clipPath>
    </defs>

    <path d={shadow} fill="#a8a9ab" filter="url(#b4)" />
    <path d={mirrorRear} fill="#5a5c5f" opacity=".2" />
    <path d={mirrorFront} fill="#c9cbcd" opacity=".12" />
    <g opacity=".5" filter="url(#b2)" fill="none">
      <path d={curve(lo(60, 1210, 85, 1090, 135, 980, 200, 890, 280, 830, 370, 810, 450, 830, 530, 890, 600, 980, 680, 1090, 735, 1210), false)} stroke="#b4b6b9" strokeWidth="4" />
      <path d={curve(lo(640, 960, 720, 1070, 790, 1210), false)} stroke="#bcbec1" strokeWidth="4" />
      <path d={curve(lo(270, 1160, 350, 1080, 450, 1000, 500, 965, 560, 1050, 650, 1210), false)} stroke="#d6d8da" strokeWidth="12" />
      <path d={curve(lo(70, 1110, 130, 1100, 210, 1085), false)} stroke="#a8aaae" strokeWidth="6" />
    </g>
    {lo(343, 865, 131, 1060, 337, 1143, 807, 1130, 600, 1020).map((p, i) => <ellipse key={i} cx={p[0]} cy={p[1]} rx={i === 0 ? 10 : 7} ry="8" fill={i === 0 || i === 4 ? "#d2d4d5" : "#b9bbbe"} opacity=".6" />)}

    <path d={rearOutline} fill="url(#edge)" />
    <g clipPath="url(#rearClip)">
      <path d={rearFace} fill="url(#rear)" filter="url(#b4)" />
      <path d={curve(up(800, 110, 900, 100, 1000, 135, 1090, 210, 1180, 320, 1260, 450, 1330, 600, 1370, 760), false)} fill="none" stroke="#868888" strokeWidth="14" opacity=".45" filter="url(#b8)" />
      <path d={curve(up(950, 430, 985, 385, 1010, 420, 1000, 560, 970, 700))} fill="#848585" filter="url(#b4)" />
      <path d={poly(ft(1110, 245, 1260, 180, 1240, 300, 1225, 400, 1180, 360))} fill="#535554" filter="url(#b2)" />
      <path d={poly(up(1075, 980, 1150, 1030, 1240, 1105, 1210, 1155, 1095, 1090))} fill="#838485" filter="url(#b4)" />
      <path d={poly(up(1095, 1228, 1190, 1163, 1215, 1160, 1225, 1180, 1195, 1185, 1100, 1252))} fill="#525453" filter="url(#b2)" />
      <path d={poly(up(1100, 1240, 1220, 1200, 1300, 1300, 1250, 1500, 1060, 1500))} fill="#797b7a" opacity=".5" filter="url(#b8)" />
    </g>
    <path d={rearOutline} fill="none" stroke="#565958" strokeWidth="1" />
    {up(838, 69).map((p) => <ellipse key="a" cx={p[0]} cy={p[1]} rx="8" ry="3" fill="#4c4f4e" transform={`rotate(-5 ${p[0]} ${p[1]})`} />)}
    {up(858, 105).map((p) => <ellipse key="b" cx={p[0]} cy={p[1]} rx="9" ry="7" fill="#6b6e6d" stroke="#626564" />)}
    {up(1161, 222).map((p) => <ellipse key="c" cx={p[0]} cy={p[1]} rx="6" ry="9" fill="#696c6b" transform={`rotate(-20 ${p[0]} ${p[1]})`} />)}
    {up(1170, 305, 1044, 730, 1098, 895, 1378, 781).map((p, i) => <Hole key={i} p={p} rx={i === 0 ? 10 : 8} ry={i === 3 ? 11 : 9} />)}
    {up(1399, 689, 1440, 1232).map((p, i) => <ellipse key={i} cx={p[0]} cy={p[1]} rx="5" ry="13" fill="#838585" transform={`rotate(${i ? 18 : -3} ${p[0]} ${p[1]})`} />)}
    {lo(1220, 232).map((p) => <g key="d" transform={`rotate(15 ${p[0]} ${p[1]})`}><ellipse cx={p[0]} cy={p[1]} rx="8" ry="10" fill="url(#bore)" /><ellipse cx={p[0] - 4} cy={p[1] + 4} rx="2.500" ry="5" fill="#eef0f2" /></g>)}
    {lo(1047, 571).map((p) => <ellipse key="e" cx={p[0]} cy={p[1]} rx="9" ry="5" fill="#858786" />)}

    <path d={frontOutline} fill="url(#edge)" stroke="#575a59" strokeWidth=".8" />
    <g clipPath="url(#frontClip)">
      <path d={crest} fill="url(#lip)" filter="url(#b2)" />
    </g>
    <path d={recess} fill="url(#face)" stroke="#656867" strokeWidth="1" />

    <g clipPath="url(#recessClip)">
      <path d={curve(fb(1100, -500, 1250, -200, 1330, 100, 1350, 300, 1300, 500, 1200, 690), false)} fill="none" stroke="#6d706f" strokeWidth="5" opacity=".7" filter="url(#b2)" />
      {/* shaded hollows along the left of the rim */}
      <path d={curve(ft(60, 560, 75, 510, 130, 530, 225, 545, 150, 565, 132, 640, 125, 700, 90, 760, 90, 850, 150, 1000, 60, 1000))} fill="#535655" filter="url(#b2)" />
      <path d={curve(ft(95, 430, 130, 330, 200, 240, 280, 180, 340, 160, 345, 180, 270, 250, 225, 270, 200, 330, 140, 400))} fill="#565958" filter="url(#b2)" />
      <path d={curve(ft(150, 430, 190, 360, 230, 350, 215, 420, 240, 460, 190, 520, 150, 500))} fill="#606362" filter="url(#b4)" />
      <path d={curve(ft(235, 320, 300, 325, 290, 345, 220, 345))} fill="#575a59" filter="url(#b2)" />
      <path d={curve(ft(330, 160, 380, 185, 430, 215, 490, 235, 470, 265, 420, 240))} fill="#6a6d6c" filter="url(#b4)" />
      <path d={poly(ft(370, 180, 425, 130, 500, 98, 560, 95, 500, 120, 490, 175, 485, 225, 460, 235, 425, 212))} fill="#535655" filter="url(#b2)" />
      <path d={curve(ft(330, 145, 375, 118, 425, 130, 400, 170, 365, 180))} fill="#7a7c7c" filter="url(#b1)" />
      <path d={curve(ft(560, 120, 600, 128, 650, 120, 630, 140, 590, 140))} fill="#565958" filter="url(#b2)" />
      <path d={curve(ft(745, 125, 800, 150, 870, 190, 860, 215, 800, 190, 765, 175))} fill="#5a605f" filter="url(#b2)" />
      <path d={curve(ft(755, 135, 800, 155, 815, 180, 790, 188, 765, 165))} fill="#757878" filter="url(#b1)" />
      <path d={curve(ft(1150, 480, 1170, 510, 1195, 530, 1150, 522, 1140, 500))} fill="#565958" filter="url(#b1)" />
      <path d={curve(ft(145, 590, 180, 555, 240, 560, 220, 700, 190, 760, 150, 700, 135, 650))} fill="#787a7b" filter="url(#b2)" />
      <path d={curve(ft(90, 430, 140, 400, 150, 440, 130, 500, 80, 500))} fill="#7b7d7d" filter="url(#b4)" />
      <path d={curve(fb(90, -90, 140, -60, 170, 0, 230, 40, 150, 60, 100, 60))} fill="#626564" filter="url(#b4)" />

      {/* upper boss housing */}
      <path d={poly(ft(240, 430, 430, 320, 560, 322, 850, 290, 930, 325, 700, 440, 600, 435, 320, 455))} fill="#7a7f80" filter="url(#b2)" />
      <path d={curve(ft(430, 310, 520, 292, 680, 278, 850, 262, 910, 285), false)} fill="none" stroke="#868888" strokeWidth="10" filter="url(#b4)" />
      <path d={curve(ft(850, 240, 900, 245, 930, 290, 920, 320, 870, 290))} fill="#838585" filter="url(#b4)" />
      <path d={poly(ft(690, 430, 925, 325, 945, 365, 720, 500, 690, 480))} fill="url(#shaft)" filter="url(#b2)" />

      {/* right side slab and ridge */}
      <path d={poly(ft(725, 490, 940, 365, 1225, 720, 1000, 820, 960, 800))} fill="#717472" filter="url(#b2)" />
      <path d={curve(ft(940, 300, 1010, 440, 1120, 610, 1220, 730, 1270, 850), false)} fill="none" stroke="#838585" strokeWidth="10" filter="url(#b4)" />
      <path d={poly(ft(965, 830, 1215, 720, 1250, 850, 1240, 870, 1015, 960, 960, 920))} fill="url(#shaft)" filter="url(#b2)" />
      <path d={poly(fb(1000, 100, 1235, 25, 1195, 250, 1158, 430, 930, 475))} fill="#525453" filter="url(#b1)" />
      <path d={poly(fb(920, 475, 1155, 425, 1145, 490, 1110, 500, 915, 568))} fill="url(#shaft)" filter="url(#b1)" />
      <path d={poly(fb(1240, 30, 1300, 100, 1320, 300, 1250, 450, 1165, 440, 1200, 250))} fill="#7b7d7d" filter="url(#b4)" />
      <path d={curve(fb(1290, 150, 1318, 70, 1325, 130, 1310, 160, 1335, 230))} fill="#868888" filter="url(#b1)" />

      {/* pockets around the hub */}
      <path d={poly(ft(360, 495, 590, 483, 470, 540, 340, 590, 300, 640, 340, 560))} fill="#505352" filter="url(#b1)" />
      <path d={poly(ft(285, 645, 345, 605, 440, 575, 490, 650, 485, 730, 460, 760, 220, 860, 245, 660))} fill="#515453" filter="url(#b1)" />
      <path d={poly(ft(440, 565, 590, 495, 660, 600, 745, 575, 730, 640, 690, 660, 600, 658, 545, 672))} fill="#727574" filter="url(#b1)" />
      <path d={poly(ft(745, 590, 830, 660, 905, 800, 860, 830, 800, 750, 740, 680))} fill="#595c5b" filter="url(#b2)" />
      <path d={poly(ft(760, 660, 830, 680, 870, 780, 800, 740))} fill="#717473" filter="url(#b2)" />
      <path d={poly([...ft(215, 865, 480, 755, 495, 800), ...fb(370, 40, 500, 75, 300, 145, 250, 160, 235, 70)])} fill="url(#shaft)" filter="url(#b1)" />
      <path d={poly(fb(255, 180, 510, 95, 610, 240, 600, 320, 430, 435))} fill="#717472" filter="url(#b1)" />
      <path d={poly(fb(255, 158, 380, 110, 510, 78, 500, 100, 262, 182))} fill="#505352" filter="url(#b1)" />
      <path d={poly(fb(650, 255, 785, 245, 768, 332, 632, 380))} fill="#525453" filter="url(#b1)" />
      <path d={poly(fb(435, 440, 600, 335, 630, 385, 780, 325, 860, 370, 820, 390, 860, 445, 800, 500, 560, 510, 480, 560))} fill="#797b7c" filter="url(#b1)" />
      <path d={poly(fb(560, 400, 790, 315, 815, 375, 530, 475, 525, 450))} fill="url(#shaft)" filter="url(#b1)" />
      <path d={poly(fb(850, 100, 950, 130, 925, 290, 905, 330, 830, 200))} fill="#6b6e6c" filter="url(#b1)" />
      <path d={poly(fb(850, 110, 950, 130, 945, 165, 835, 195))} fill="#555857" filter="url(#b2)" />
      <path d={poly(fb(130, 200, 210, 200, 420, 490, 420, 560, 290, 480, 190, 330))} fill="#666a68" filter="url(#b2)" />
      <path d={curve(fb(240, 260, 300, 350, 400, 480, 420, 560, 350, 500, 260, 340))} fill="#757877" filter="url(#b4)" />

      {/* lower rim pads */}
      <path d={poly(fb(500, 600, 620, 565, 840, 545, 600, 590))} fill="#4f5251" filter="url(#b1)" />
      <path d={curve(fb(480, 630, 560, 600, 600, 680, 680, 740, 820, 790, 700, 780, 560, 720))} fill="#6f7172" filter="url(#b4)" />
      <g fill="none" stroke="#868888" strokeWidth="9" strokeLinejoin="round" opacity=".6" filter="url(#b4)">
        <path d={curve(fb(580, 640, 640, 690, 700, 700), false)} />
        <path d={curve(fb(720, 700, 760, 630, 830, 720), false)} />
        <path d={curve(fb(850, 720, 940, 630, 970, 640, 1000, 730), false)} />
      </g>
      <path d={curve(fb(670, 725, 700, 680, 725, 665, 715, 695, 685, 720))} fill="#6f7271" stroke="#616463" strokeWidth=".8" />
      <path d={curve(fb(1195, 540, 1225, 450, 1280, 450, 1275, 520, 1240, 560))} fill="#828486" filter="url(#b1)" />
      <path d={curve(fb(1110, 690, 1115, 630, 1140, 605, 1170, 620, 1150, 670))} fill="#808282" filter="url(#b1)" />
      <path d={curve(fb(560, 740, 700, 800, 860, 815, 1000, 780, 1100, 700, 1110, 650), false)} fill="none" stroke="#686b6a" strokeWidth="2" filter="url(#b1)" />
    </g>

    {/* hexagonal frame and spokes */}
    <Band p={ft(445, 565, 500, 650, 545, 700)} w={9} />
    <Band p={ft(725, 580, 715, 640, 705, 690)} w={8} />
    <Band p={fb(362, 60, 440, 60, 520, 62)} w={14} />
    <Band p={fb(800, 220, 850, 280, 905, 340)} w={8} />
    <Band p={fb(630, 240, 620, 310, 605, 380)} w={8} />
    <Band p={ft(300, 478, 450, 465, 610, 450)} w={11} />
    <Band p={ft(720, 490, 830, 650, 880, 730, 930, 820)} w={10} />
    <Band p={fb(965, 110, 940, 270, 905, 460)} w={12} />
    <Band p={fb(530, 540, 690, 530, 840, 525)} w={11} />
    <Band p={fb(220, 190, 330, 345, 440, 500)} w={9} />
    <Band p={[...ft(240, 620, 215, 760), ...fb(190, 30)]} w={12} />

    <g stroke="#6a6d6d" strokeWidth=".8">
      <path d={curve(ft(203, 500, 205, 465, 230, 447, 262, 455, 290, 505, 335, 575, 330, 595, 285, 642, 268, 625, 235, 545))} fill="#767879" />
      <path d={poly(ft(590, 490, 685, 538, 668, 545, 662, 603, 572, 560))} fill="#757778" />
      <path d={curve(ft(598, 480, 612, 438, 650, 422, 685, 445, 694, 485, 684, 535, 640, 515))} fill="#797b7b" />
      <path d={poly(fb(838, 18, 893, 5, 920, 110, 868, 120))} fill="#767879" />
      <path d={curve(fb(907, -5, 960, -10, 995, -5, 1012, 35, 1005, 80, 985, 95, 935, 106, 920, 50))} fill="#797b7b" />
      <path d={curve(fb(105, 110, 120, 80, 160, 70, 228, 70, 240, 120, 252, 180, 195, 183, 165, 210, 130, 205, 123, 170, 107, 140))} fill="#757778" />
      <path d={curve(fb(418, 605, 435, 580, 478, 610, 480, 630, 455, 648, 428, 632))} fill="#797b7b" />
      <path d={curve(fb(428, 450, 475, 395, 520, 440, 520, 480, 510, 530, 516, 545, 500, 600, 465, 612, 432, 590, 425, 520))} fill="#777979" />
      <path d={curve(fb(805, 502, 865, 442, 905, 485, 918, 530, 908, 566, 865, 545))} fill="#787a7a" />
    </g>
    <path d={`M${ft(597, 488)[0].join(" ")}L${ft(684, 537)[0].join(" ")}`} stroke="#575a59" />
    <path d={poly(ft(664, 603, 668, 545, 685, 538, 745, 575))} fill="#4f5251" />
    <path d={poly(fb(897, 0, 905, -2, 932, 106, 920, 110))} fill="#4b4e4d" />
    <path d={curve(fb(123, 180, 135, 175, 155, 190, 145, 208, 128, 200))} fill="#565958" />
    <path d={curve(fb(432, 582, 418, 600, 422, 622), false)} fill="none" stroke="#4b4e4d" strokeWidth="2" />
    <path d={`M${fb(805, 502)[0].join(" ")}L${fb(868, 442)[0].join(" ")}`} stroke="#4b4e4d" strokeWidth="1.500" />

    {ft(243, 488, 652, 450).map((p, i) => <Hole key={i} p={p} rx={6} ry={8} />)}
    {ft(618, 548).map((p, i) => <Hole key={i} p={p} rx={5} ry={6} />)}
    {fb(970, 45, 148, 130, 463, 557, 878, 515).map((p, i) => <Hole key={i} p={p} rx={7} ry={9} />)}
    {fb(467, 468).map((p, i) => <Hole key={i} p={p} rx={5} ry={5} />)}
    {fb(858, 760).map((p, i) => <g key={i}><circle cx={p[0]} cy={p[1]} r="13" fill="#7c7e7e" /><Hole p={p} rx={9} ry={10} /></g>)}
    {fb(1205, 578).map((p, i) => <g key={i}><circle cx={p[0]} cy={p[1]} r="11" fill="#7c7e7e" /><Hole p={p} rx={7} ry={7} /></g>)}
    {fb(316, 388).map((p) => <g key="h"><ellipse cx={p[0]} cy={p[1]} rx="11" ry="8" fill="#4d504f" /><ellipse cx={p[0] + 3} cy={p[1]} rx="8" ry="7" fill="#7d7f7f" /><ellipse cx={p[0] + 5} cy={p[1] + 2} rx="5" ry="4" fill="#555857" /></g>)}
    {ft(154, 728).map((p) => <g key="i"><ellipse cx={p[0]} cy={p[1]} rx="13" ry="12" fill="#6e7170" stroke="#585b5a" strokeWidth=".8" /><ellipse cx={p[0]} cy={p[1] + 4} rx="8" ry="6" fill="#505352" /></g>)}
    {ft(260, 288).map((p) => <g key="j"><ellipse cx={p[0] + 1} cy={p[1]} rx="13" ry="12" fill="#737675" /><ellipse cx={p[0]} cy={p[1]} rx="9" ry="9" fill="url(#bore)" /><ellipse cx={p[0] - 6} cy={p[1]} rx="2.500" ry="5.500" fill="#f4f6f7" /></g>)}
    {ft(915, 107).map((p, i) => <Lens key={i} p={p} rx={13} ry={4} turn={18} />)}
    {ft(1297, 512).map((p, i) => <Lens key={i} p={p} rx={7} ry={11} turn={-38} />)}
    {ft(120, 518).map((p, i) => <Lens key={i} p={p} rx={12} ry={4} turn={4} />)}
    {ft(612, 108).map((p, i) => <Lens key={i} p={p} rx={12} ry={5} turn={4} />)}
    {fb(1425, 228).map((p, i) => <Lens key={i} p={p} rx={5} ry={10} turn={-6} />)}
    <path d={poly(ft(551, 108, 570, 102, 573, 112, 556, 117))} fill="#ec6a1d" />

    {/* hub, seal and bore */}
    <path d={oval(1044, 661, 60, 74, 1150)} fill="#5f6261" filter="url(#b2)" />
    <path d={oval(1044, 661, 58, 72, 1100)} fill="#757879" />
    <path d={oval(1046, 663, 48, 60, 700)} fill="#828484" filter="url(#b1)" />
    <path d={oval(1044, 661, 46, 58, 650)} fill="#4c4f4e" />
    <path d={oval(1046, 662, 44, 57, 620)} fill="#6b6b6a" />
    <path d={curve([...ft(606, 850, 612, 810, 640, 783, 680, 780), ...fb(740, -20, 757, 30, 745, 100, 700, 108, 650, 75, 615, 35)])} fill="#474848" />
    <g clipPath="url(#boreClip)">
      <path d="M1020 620h70v80h-70z" fill="#9a2dab" />
      <path d={curve([...ft(675, 780, 655, 810, 655, 850), ...fb(670, 40, 705, 75, 760, 90, 780, 0, 720, -80)])} fill="#82258f" />
      <path d={curve(fb(690, 62, 720, 80, 770, 60, 770, 130, 680, 120))} fill="#a52fb6" filter="url(#b1)" />
      <path d={curve([...ft(650, 800, 648, 850), ...fb(660, 50, 700, 88, 735, 98)], false)} fill="none" stroke="#bb4cca" strokeWidth="1.500" />
      <path d={curve([...ft(715, 800, 780, 790), ...fb(790, 60, 757, 54, 730, 30, 715, -5)])} fill="#b6c2cd" />
    </g>

    {/* spin centre */}
    <path d={`M${ft(969, 743)[0].join(" ")}L${ft(974, 672)[0].join(" ")}`} stroke="#4fd65a" strokeWidth="1.300" />
    <path d={`M${ft(969, 743)[0].join(" ")}L${ft(921, 765)[0].join(" ")}`} stroke="#5be3ea" strokeWidth="1.600" />
    <path d={`M${ft(969, 743)[0].join(" ")}L${ft(1030, 767)[0].join(" ")}`} stroke="#e34545" strokeWidth="1.500" strokeDasharray="4 1" />
    <circle cx="1144.700" cy="594" r="2" fill="#4be04b" />
    <circle cx="1127" cy="625" r="3" fill="#42e9f2" />
    <circle cx="1163.300" cy="625.700" r="2.500" fill="#f23b3b" />
  </Scene>
);

/* ---------- composed parts ---------- */

const Big = ({ w, icon, lines, drop }: { w: number; icon: Draw; lines: string[]; drop?: boolean }) => (
  <BigButton $w={w}>
    {icon}
    <BigLine>{lines[0]}</BigLine>
    {(lines[1] || drop) && <BigLine>{lines[1]}{drop && <Caret />}</BigLine>}
  </BigButton>
);

const Small = ({ icon, label, drop, off }: { icon: Draw; label: string; drop?: boolean; off?: boolean }) => (
  <SmallButton disabled={off}>{icon}<span>{label}</span>{drop && <Caret c={off ? MUTED : undefined} />}</SmallButton>
);

const Group = ({ w, label, pad, children }: { w: number; label: string; pad?: number; children: Draw }) => (
  <GroupBox $w={w}>
    <GroupBody $pad={pad}>{children}</GroupBody>
    <GroupLabel>{label} <Caret /></GroupLabel>
  </GroupBox>
);

const DropArrow = ({ label, off, light }: { label: string; off?: boolean; light?: boolean }) => (
  <IconButton $w={14} aria-label={label}><Caret c={light ? "#fff" : off ? MUTED : undefined} /></IconButton>
);

const Guide = ({ kind }: { kind: "leaf" | "node" }) => (
  <svg width="20" height="16" viewBox="0 0 20 16" fill="none" aria-hidden="true">
    {kind === "leaf" ? <path d="M8.500 0v16M9 8.500h10" stroke="#c3c5c8" /> : <><path d="M8.500 0v3M8.500 13v3" stroke="#c3c5c8" /><path d="M6 3.500L13 8l-7 4.500z" fill="#85878a" /></>}
  </svg>
);

const parts = [
  { name: "DEFAULT", kind: "csys" },
  { name: "X_PLANE", kind: "plane" },
  { name: "Y_PLANE", kind: "plane" },
  { name: "Z_PLANE", kind: "plane" },
  { name: "6148498CH.PRT", kind: "part", current: true },
  { name: "6150324.PRT", kind: "part" },
  { name: "6146499.ASM", kind: "asm" },
  { name: "6150324.PRT", kind: "part" },
  { name: "6141109.PRT", kind: "part" },
  { name: "6141109.PRT", kind: "part" },
];
const partIcon: Record<string, Draw> = { csys: I.csysDim, plane: I.planeDim, part: I.part, asm: I.asm };

const tabs = ["Analysis", "Live Simulation", "Annotate", "Manikin", "Tools", "View", "Framework", "Applications"];

const viewTools: [string, Draw, boolean?][] = [
  ["Refit", I.refit], ["Zoom In", I.zoomIn], ["Zoom Out", I.zoomOut], ["Repaint", I.repaint],
  ["Shading", I.shading], ["Display Style", I.style], ["Saved Orientations", I.saved], ["View Manager", I.viewMgr],
  ["Perspective", I.persp], ["Hidden Lines", I.hidden], ["Datum Display", I.datum], ["Annotation Display", I.annot, true],
  ["Spin Center", I.spin, true], ["Simulate", I.simulate], ["Pause", I.pause], ["Resume", I.play],
];

export default function App() {
  return (
    <Frame>
      <GlobalStyle />
      <TitleBar>
        <QuickBar>
          <Brand>{I.logo}<span>creo</span></Brand>
          <IconButton aria-label="New">{I.doc}</IconButton>
          <IconButton aria-label="Open">{I.open}</IconButton>
          <IconButton aria-label="Save">{I.save}</IconButton>
          <IconButton aria-label="Undo">{I.undo}</IconButton><DropArrow label="Undo list" off />
          <IconButton aria-label="Redo">{I.redo}</IconButton><DropArrow label="Redo list" off />
          <IconButton aria-label="Erase displayed">{I.cleanA}</IconButton>
          <IconButton aria-label="Erase not displayed">{I.cleanB}</IconButton>
          <IconButton aria-label="Parameters"><Brackets /></IconButton>
          <IconButton aria-label="Relations"><Dequals /></IconButton>
          <IconButton aria-label="Appearance"><Ball s={15} /></IconButton><DropArrow label="Appearance list" />
          <IconButton aria-label="Regenerate">{I.regenList}</IconButton>
          <IconButton aria-label="Windows">{I.windows}</IconButton><DropArrow label="Window list" />
          <IconButton aria-label="Close">{I.close}</IconButton>
          <IconButton aria-label="Select">{I.select}</IconButton><DropArrow label="Select list" />
          <Rule $h={24} />
          <IconButton aria-label="Customize"><Ico s={9}><path d="M0 1h9" stroke={INK} strokeWidth="1.200" /><path d="M0 3h9L4.500 8z" fill={INK} /></Ico></IconButton>
        </QuickBar>
        <Title>6148499CH (Active) - Creo Parametric 10.0</Title>
        <WindowButtons>
          <IconButton $w={27} aria-label="Minimize window"><Ico s={12}><path d="M1 8h10" stroke="#b3b7b8" strokeWidth="2" /></Ico></IconButton>
          <IconButton $w={27} aria-label="Restore window"><Ico s={12}><path d="M1 5h7v5H1zM4 5V2h7v5H8" stroke="#b3b7b8" strokeWidth="1.500" /></Ico></IconButton>
          <IconButton $w={27} aria-label="Close window"><Ico s={12}><path d="M2 2l8 8M10 2l-8 8" stroke="#b3b7b8" strokeWidth="2.200" /></Ico></IconButton>
        </WindowButtons>
      </TitleBar>

      <TabBar>
        <Tab $kind="file">File</Tab>
        <Tab $kind="active">Model</Tab>
        {tabs.map((t) => <Tab key={t}>{t}</Tab>)}
        <TabTools>
          <IconButton aria-label="Collapse ribbon"><Ico s={12}><path d="M1 7l5-5 5 5H8L6 5 4 7z" fill="#fff" /></Ico></IconButton>
          <IconButton aria-label="Search"><Ico s={12}><circle cx="7.500" cy="4.500" r="3.200" stroke="#e8e9ea" strokeWidth="1.600" /><path d="M5 7l-4 4" stroke="#e8e9ea" strokeWidth="2" /></Ico></IconButton>
          <IconButton aria-label="Learning"><Ico s={12}><path d="M0 4l6-3 6 3-6 3z" fill="#e8e9ea" /><path d="M3 6v3q3 2 6 0V6L6 8zM1 5v5" fill="#e8e9ea" stroke="#e8e9ea" strokeWidth=".8" /></Ico></IconButton>
          <DropArrow label="Learning list" light />
          <IconButton aria-label="Help"><Ico s={12}><path d="M3 4q0-3 3-3t3 2.700Q9 5 7.500 6 6 7 6 8.200M6 9.500V12" stroke="#fff" strokeWidth="2" /></Ico></IconButton>
        </TabTools>
      </TabBar>

      <Ribbon>
        <Group w={149} label="Operations">
          <Big w={72} icon={I.regen} lines={["Regenerate"]} drop />
          <SmallColumn $w={76}>
            <Small icon={I.copy} label="Copy" off />
            <Small icon={I.paste} label="Paste" off drop />
            <Small icon={I.del} label="Delete" off drop />
          </SmallColumn>
        </Group>
        <Group w={146} label="Get Data" pad={4}>
          <SmallColumn $w={140}>
            <Small icon={I.udf} label="User-Defined Feature" />
            <Small icon={I.copyGeo} label="Copy Geometry" />
            <Small icon={I.shrink} label="Shrinkwrap" />
          </SmallColumn>
        </Group>
        <Group w={278} label="Component">
          <Big w={64} icon={I.assemble} lines={["Assemble"]} drop />
          <SmallColumn $w={130} $ruled>
            <Small icon={I.create} label="Create" drop />
            <Small icon={I.repeat} label="Repeat" off />
            <Small icon={I.mirror} label="Mirror Component" />
          </SmallColumn>
          <Big w={83} icon={I.drag} lines={["Drag", "Components"]} />
        </Group>
        <Group w={218} label="Datum">
          <Big w={44} icon={I.plane} lines={["Plane"]} />
          <SmallColumn $w={126}>
            <Small icon={I.axis} label="Axis" />
            <Small icon={I.point} label="Point" drop />
            <Small icon={I.csys} label="Coordinate System" />
          </SmallColumn>
          <Big w={44} icon={I.sketch} lines={["Sketch"]} />
        </Group>
        <Group w={96} label="Cut & Surface" pad={14}>
          <SmallColumn $w={78}>
            <Small icon={I.hole} label="Hole" />
            <Small icon={I.extrude} label="Extrude" />
            <Small icon={I.revolve} label="Revolve" />
          </SmallColumn>
        </Group>
        <Group w={72} label="Modifiers">
          <Big w={70} icon={I.pattern} lines={["Pattern"]} drop />
        </Group>
        <Group w={400} label="Model Display" pad={4}>
          <Big w={50} icon={I.manage} lines={["Manage", "Views"]} drop />
          <Big w={46} icon={I.section} lines={["Section"]} drop />
          <Big w={78} icon={<Ico s={32}><g transform="translate(1 1)"><Ball s={30} /></g></Ico>} lines={["Appearances"]} drop />
          <SmallColumn $w={104}>
            <Small icon={I.exploded} label="Exploded View" />
            <Small icon={I.toggle} label="Toggle Status" off />
            <Small icon={I.editPos} label="Edit Position" />
          </SmallColumn>
          <Big w={46} icon={I.display} lines={["Display", "Style"]} drop />
          <Big w={68} icon={I.perspective} lines={["Perspective", "View"]} />
        </Group>
        <Group w={310} label="Model Intent" pad={4}>
          <Big w={70} icon={I.iface} lines={["Component", "Interface"]} />
          <Big w={62} icon={I.publish} lines={["Publish", "Geometry"]} />
          <Big w={42} icon={I.family} lines={["Family", "Table"]} />
          <SmallColumn $w={130}>
            <Small icon={<Brackets />} label="Parameters" />
            <Small icon={I.switchDim} label="Switch Dimensions" />
            <Small icon={<Dequals />} label="Relations" />
          </SmallColumn>
        </Group>
        <Group w={123} label="Investigate" pad={3}>
          <Big w={56} icon={I.bom} lines={["Bill of", "Materials"]} />
          <Big w={60} icon={I.refview} lines={["Reference", "Viewer"]} />
        </Group>
      </Ribbon>

      <Body>
        <Side>
          <SideTabs>
            <SideTab $on aria-label="Model Tree">{I.tree}</SideTab>
            <SideTab aria-label="Folder Browser">{I.folders}</SideTab>
          </SideTabs>
          <SideTools>
            <IconButton aria-label="Model">{I.greenCube}</IconButton>
            {I.grip}
            <Spacer $w={3} />
            <IconButton aria-label="Expand all">{I.expand}</IconButton>
            <IconButton aria-label="Collapse all">{I.collapse}</IconButton>
            <IconButton aria-label="Columns">{I.columns}</IconButton>
            <Rule $h={24} $m={4} />
            <IconButton aria-label="Tree filters">{I.treeFilter}</IconButton>
            <IconButton aria-label="Tree columns">{I.treeCols}</IconButton>
            <Rule $h={24} $m={4} />
            <IconButton aria-label="Tree settings">{I.gears}</IconButton>
            <IconButton aria-label="Layers">{I.layers}</IconButton>
            <IconButton aria-label="Select in tree">{I.treePick}</IconButton>
            <Spacer />
            <IconButton aria-label="Settings">{I.settings}</IconButton>
          </SideTools>
          <FilterRow>
            <IconButton aria-label="Filter">{I.funnel}</IconButton>
            <FilterField>
              <FilterInput type="text" aria-label="Filter the model tree" />
              <IconButton $w={18} aria-label="Clear">{I.clear}</IconButton>
            </FilterField>
            <IconButton $w={18} aria-label="Filter history"><Caret /></IconButton>
            <IconButton aria-label="Add filter">{I.plus}</IconButton>
          </FilterRow>
          <ColumnHead />
          <Tree>
            <TreeRow>{I.asm}<span>6148499CH.ASM</span></TreeRow>
            {parts.map((p, i) => {
              const leaf = p.kind === "csys" || p.kind === "plane";
              return (
                <TreeRow key={i} $dim={leaf} $current={p.current}>
                  <Guide kind={leaf ? "leaf" : "node"} />
                  {partIcon[p.kind]}
                  <span>{p.name}</span>
                </TreeRow>
              );
            })}
            <InsertLine>
              <svg width="3" height="8" viewBox="0 0 3 8"><path d="M0 0l3 4-3 4z" fill="#5fae47" /></svg>
              <InsertBar />
              <svg width="3" height="8" viewBox="0 0 3 8"><path d="M3 0L0 4l3 4z" fill="#5fae47" /></svg>
            </InsertLine>
          </Tree>
        </Side>

        <View>
          <Model />
          <ViewTools>
            {viewTools.map(([name, icon, on]) => (
              <ViewSlot key={name}><IconButton $on={on} aria-label={name}>{icon}</IconButton></ViewSlot>
            ))}
          </ViewTools>
          <Drawer aria-label="Open side panel" />
        </View>
      </Body>

      <StatusBar>
        <StatusTools>
          <ViewSlot><IconButton $w={22} $on aria-label="Toggle navigator">{I.panel}</IconButton></ViewSlot>
          <ViewSlot><IconButton aria-label="Browser">{I.globe}</IconButton></ViewSlot>
          <ViewSlot><IconButton aria-label="Full screen">{I.blank}</IconButton></ViewSlot>
          <ViewSlot><IconButton aria-label="Statistics">{I.bars}</IconButton></ViewSlot>
          <Rule $h={24} $m={5} />
        </StatusTools>
        <Spacer />
        <Rule $h={30} $m={2} />
        <Rule $h={30} $m={2} />
        <StatusBox $w={42} $h={24}>
          <IconButton $w={26} $h={22} aria-label="Find">{I.find}</IconButton>
          <Rule $h={22} />
          <IconButton $w={13} $h={22} aria-label="Find options"><Caret /></IconButton>
        </StatusBox>
        <Rule $h={30} $m={2} />
        <StatusBox $w={40} $h={27}>
          <IconButton $w={38} $h={25} aria-label="3D box selection">{I.box3d}</IconButton>
        </StatusBox>
        <Picker>
          <PickerSelect aria-label="Selection filter" defaultValue="Geometry"><option>Geometry</option></PickerSelect>
          <Caret />
        </Picker>
      </StatusBar>
      <BottomEdge />
    </Frame>
  );
}
